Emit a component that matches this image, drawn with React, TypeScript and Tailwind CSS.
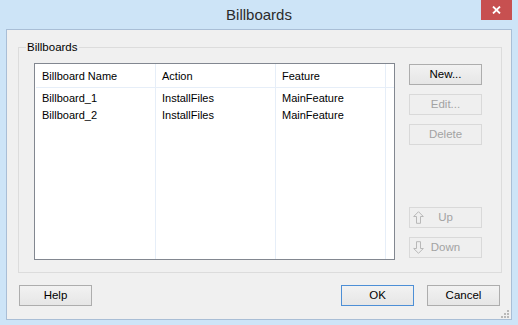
import React from "react";

type Row = {
  name: string;
  action: string;
  feature: string;
};

const rows: Row[] = [
  { name: "Billboard_1", action: "InstallFiles", feature: "MainFeature" },
  { name: "Billboard_2", action: "InstallFiles", feature: "MainFeature" },
];

const font = { fontFamily: '"Liberation Sans", Arial, sans-serif' };

function Btn({
  label,
  disabled,
  primary,
  icon,
}: {
  label: string;
  disabled?: boolean;
  primary?: boolean;
  icon?: React.ReactNode;
}) {
  let cls =
    "relative w-[73px] h-[21px] flex items-center justify-center text-[11.5px] leading-none border ";
  if (disabled) {
    cls += "border-[#d9d9d9] bg-[#efefef] text-[#a3a3a3]";
  } else if (primary) {
    cls += "border-[#4d8fd6] bg-gradient-to-b from-[#f2f2f2] to-[#e6e6e6] text-black";
  } else {
    cls += "border-[#adadad] bg-gradient-to-b from-[#f2f2f2] to-[#e6e6e6] text-black";
  }
  return (
    <div className={cls}>
      {icon && <span className="absolute left-[3px] top-[3px]">{icon}</span>}
      {label}
    </div>
  );
}

function ArrowIcon({ down }: { down?: boolean }) {
  return (
    <svg width="11" height="13" viewBox="0 0 11 13" className={down ? "rotate-180" : ""}>
      <path
        d="M5.5 0.7 L10.3 5.5 L7.5 5.5 L7.5 12.3 L3.5 12.3 L3.5 5.5 L0.7 5.5 Z"
        fill="none"
        stroke="#b8b8b8"
        strokeWidth="1"
      />
    </svg>
  );
}

function Column({
  title,
  values,
  className,
}: {
  title: string;
  values: string[];
  className: string;
}) {
  return (
    <div className={"flex flex-col border-r border-[#e6eef8] " + className}>
      <div className="h-[24px] border-b border-[#e6eef8] flex items-center pt-[2px] px-[6px] text-[11px]">
        {title}
      </div>
      <div className="pt-[2px]">
        {values.map((v, i) => (
          <div key={i} className="h-[17px] flex items-center px-[6px] text-[11px]">
            {v}
          </div>
        ))}
      </div>
    </div>
  );
}

export default function App() {
  return (
    <div className="w-[518px] h-[325px] bg-[#cde4f7] flex flex-col overflow-hidden" style={font}>
      {/* title bar */}
      <div className="relative h-[29px] flex items-center justify-center">
        <span className="text-[15px] text-[#2b2b2b] pt-[1px]">Billboards</span>
        <div className="absolute right-[6px] top-0 w-[31px] h-[20px] bg-[#c75050] flex items-center justify-center">
          <svg width="9" height="8" viewBox="0 0 9 8">
            <path d="M1 0.5 L8 7.5 M8 0.5 L1 7.5" stroke="white" strokeWidth="1.8" />
          </svg>
        </div>
      </div>

      {/* client */}
      <div className="relative mx-[6px] h-[291px] border border-[#a9bed6] bg-[#f0f0f0] flex flex-col">
        <fieldset className="mt-[9px] ml-[11px] mr-[9px] border border-[#dcdcdc] pb-[12px]">
          <legend className="ml-[7px] px-[1px] text-[11.5px] leading-[16px] text-black">Billboards</legend>
          <div className="flex gap-[14px] pl-[15px] pr-[17px] pt-[8px]">
            <div className="w-[361px] h-[197px] border border-[#828790] bg-white grid grid-cols-[121px_120px_110px_1fr] text-black">
              <Column title="Billboard Name" values={rows.map((r) => r.name)} className="pl-[1px]" />
              <Column title="Action" values={rows.map((r) => r.action)} className="" />
              <Column title="Feature" values={rows.map((r) => r.feature)} className="" />
              <div className="h-[24px] border-b border-[#e6eef8]" />
            </div>
            <div className="flex flex-col justify-between pt-[1px] pb-[2px]">
              <div className="flex flex-col gap-[9px]">
                <Btn label="New..." />
                <Btn label="Edit..." disabled />
                <Btn label="Delete" disabled />
              </div>
              <div className="flex flex-col gap-[9px]">
                <Btn label="Up" disabled icon={<ArrowIcon />} />
                <Btn label="Down" disabled icon={<ArrowIcon down />} />
              </div>
            </div>
          </div>
        </fieldset>

        <div className="mt-[12px] ml-[12px] mr-[11px] flex items-center">
          <Btn label="Help" />
          <div className="flex-1" />
          <div className="flex gap-[13px]">
            <Btn label="OK" primary />
            <Btn label="Cancel" />
          </div>
        </div>

        {/* size grip */}
        <svg className="absolute right-[2px] bottom-[1px]" width="9" height="9" viewBox="0 0 9 9">
          <rect x="7" y="1" width="2" height="2" fill="#b9b9b9" />
          <rect x="4" y="4" width="2" height="2" fill="#b9b9b9" />
          <rect x="7" y="4" width="2" height="2" fill="#b9b9b9" />
          <rect x="1" y="7" width="2" height="2" fill="#b9b9b9" />
          <rect x="4" y="7" width="2" height="2" fill="#b9b9b9" />
          <rect x="7" y="7" width="2" height="2" fill="#b9b9b9" />
        </svg>
      </div>
    </div>
  );
}
